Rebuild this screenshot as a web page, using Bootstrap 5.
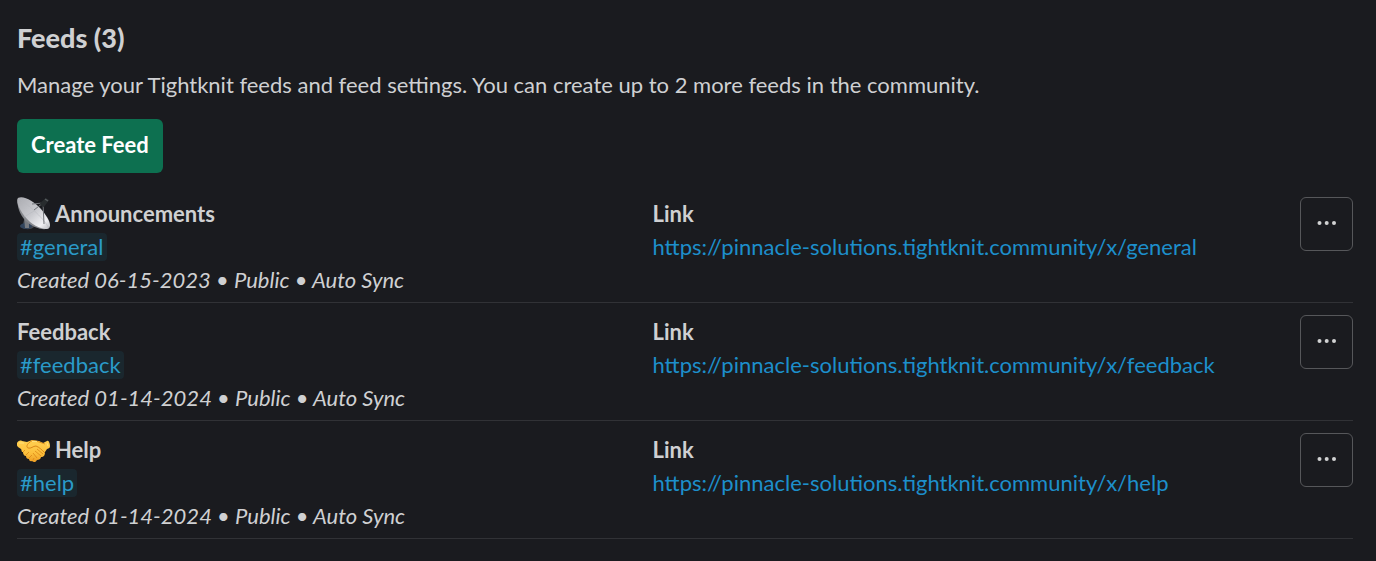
<!DOCTYPE html>
<html lang="en" data-bs-theme="dark">
<head>
<meta charset="utf-8">
<meta name="viewport" content="width=device-width, initial-scale=1">
<title>Feeds</title>
<link href="https://cdn.jsdelivr.net/npm/bootstrap@5.3.0/dist/css/bootstrap.min.css" rel="stylesheet">
<style>
  body { background: #1a1b1f; color: #cfd0d2; font-family: Lato, "Liberation Sans", sans-serif; font-size: 22px; line-height: 33px; }
  .feeds { padding: 20px 23px 22px 17px; }
  .feeds-title { color: inherit; font-size: 27px; line-height: 36px; font-weight: 900; }
  .feeds-intro { margin: 12px 0 18px; }
  .btn-create { --bs-btn-color: #fff; --bs-btn-bg: #0d7050; --bs-btn-hover-color: #fff; --bs-btn-hover-bg: #0f7d5a; --bs-btn-border-width: 0; --bs-btn-border-radius: 6px; padding: 9px 14px 12px; font-size: 22px; font-weight: 700; line-height: 33px; }
  .feed-list { padding-top: 12px; }
  .feed { padding: 12px 0 6px; gap: 12px; border-bottom: 1px solid #313236; }
  .feed-name { color: inherit; font-size: 22px; line-height: 33px; font-weight: 700; gap: 5px; }
  .channel { display: inline-block; line-height: 28px; padding: 0 3px; border-radius: 4px; background: #1a272e; color: #2a9bc9; }
  .feed-url { color: #1d8fcb; }
  .btn-more { --bs-btn-color: #d1d2d3; --bs-btn-border-color: #56575a; --bs-btn-hover-color: #fff; --bs-btn-hover-border-color: #77787b; --bs-btn-border-radius: 6px; padding: 0 0 2px; width: 53px; height: 54px; }
</style>
</head>
<body>
<main class="feeds">
  <h1 class="feeds-title mb-0">Feeds (3)</h1>
  <p class="feeds-intro">Manage your Tightknit feeds and feed settings. You can create up to 2 more feeds in the community.</p>
  <button type="button" class="btn btn-create d-block">Create Feed</button>

  <ul class="feed-list list-unstyled mb-0">
    <li class="feed d-flex align-items-start">
      <div class="row g-0 flex-grow-1">
        <div class="col-6">
          <h2 class="feed-name d-flex align-items-center mb-0">
            <svg width="33" height="33" viewBox="0 0 33 33" aria-hidden="true">
              <defs>
                <linearGradient id="dish" x1="0" y1="0" x2="1" y2="1"><stop offset="0" stop-color="#aaabb0"/><stop offset=".5" stop-color="#c9cacf"/><stop offset=".8" stop-color="#f0f0f3"/><stop offset="1" stop-color="#b7b8bd"/></linearGradient>
              </defs>
              <path d="M7 23l-2 7c2 3 9 3 12 0l-3-7z" fill="#44484e"/>
              <ellipse cx="9" cy="29" rx="6" ry="3" fill="#31445c"/>
              <path d="M7 20h5v11H8z" fill="#767a80"/>
              <path d="M1 1C-1 8 3 19 10 25c7 6 17 9 22 6z" fill="#87898e"/>
              <path d="M1 1C6-2 17 4 24 12s11 16 8 19-14-1-21-8S-2 5 1 1z" fill="url(#dish)"/>
              <path d="M1 1c9 6 24 18 31 30M17 14L7 20" fill="none" stroke="#b5b7bc" stroke-width=".5"/>
              <path d="M15 7l11-1M17 13l9-7M26 6l1 21" fill="none" stroke="#72757a" stroke-width="1"/>
              <path d="M23 6l6-5 3 2-5 7-3-1z" fill="#282c2e"/>
              <path d="M28 2l3 2" stroke="#565b5e" stroke-width="1.5"/>
            </svg>
            Announcements
          </h2>
          <div><a href="#general" class="channel text-decoration-none">#general</a></div>
          <div class="fst-italic">Created 06-15-2023 • Public • Auto Sync</div>
        </div>
        <div class="col-6">
          <div class="fw-bold">Link</div>
          <a class="feed-url text-decoration-none" href="https://pinnacle-solutions.tightknit.community/x/general">https://pinnacle-solutions.tightknit.community/x/general</a>
        </div>
      </div>
      <button type="button" class="btn btn-more d-flex align-items-center justify-content-center flex-shrink-0" aria-label="More actions for Announcements">
        <svg width="20" height="6" viewBox="0 0 20 6" fill="currentColor" aria-hidden="true"><circle cx="2.5" cy="3" r="2"/><circle cx="9.7" cy="3" r="2"/><circle cx="17" cy="3" r="2"/></svg>
      </button>
    </li>

    <li class="feed d-flex align-items-start">
      <div class="row g-0 flex-grow-1">
        <div class="col-6">
          <h2 class="feed-name mb-0">Feedback</h2>
          <div><a href="#feedback" class="channel text-decoration-none">#feedback</a></div>
          <div class="fst-italic">Created 01-14-2024 • Public • Auto Sync</div>
        </div>
        <div class="col-6">
          <div class="fw-bold">Link</div>
          <a class="feed-url text-decoration-none" href="https://pinnacle-solutions.tightknit.community/x/feedback">https://pinnacle-solutions.tightknit.community/x/feedback</a>
        </div>
      </div>
      <button type="button" class="btn btn-more d-flex align-items-center justify-content-center flex-shrink-0" aria-label="More actions for Feedback">
        <svg width="20" height="6" viewBox="0 0 20 6" fill="currentColor" aria-hidden="true"><circle cx="2.5" cy="3" r="2"/><circle cx="9.7" cy="3" r="2"/><circle cx="17" cy="3" r="2"/></svg>
      </button>
    </li>

    <li class="feed d-flex align-items-start">
      <div class="row g-0 flex-grow-1">
        <div class="col-6">
          <h2 class="feed-name d-flex align-items-center mb-0">
            <svg width="33" height="33" viewBox="0 0 33 33" aria-hidden="true">
              <defs>
                <linearGradient id="skin" x1="0" y1="0" x2="0" y2="1"><stop offset="0" stop-color="#ffd052"/><stop offset=".6" stop-color="#fcc03c"/><stop offset="1" stop-color="#ee9d24"/></linearGradient>
              </defs>
              <path d="M0 10C1 8 3 7 5 8l5 1 5-2 7 1 4 2 4-2c2-1 3 3 3 5s-1 2-3 3l-2 3c0 3-1 5-4 5 0 2-2 3-4 3-1 2-3 3-5 1-2 1-3-1-3-2-2 0-3-1-3-3-2 0-3-2-3-4-2 0-1-2-2-3l-3-2C0 13-1 11 0 10z" fill="url(#skin)"/>
              <path d="M13 9c-3 2-4 5-2 6 3 1 5-2 8-2 3 1 6 4 9 7" fill="none" stroke="#d98718" stroke-width="1"/>
              <path d="M13 9c2-2 6-1 9 0l6 2M6 19l2-2M9 22l3-3M12 25l3-3M16 27l1-2M18 18l6 5M16 20l4 5M20 16l6 5" fill="none" stroke="#d98718" stroke-width=".8"/>
              <path d="M2 10l5 0M15 8.500l5 0M30 10l1 3" fill="none" stroke="#ffe07a" stroke-width="1"/>
            </svg>
            Help
          </h2>
          <div><a href="#help" class="channel text-decoration-none">#help</a></div>
          <div class="fst-italic">Created 01-14-2024 • Public • Auto Sync</div>
        </div>
        <div class="col-6">
          <div class="fw-bold">Link</div>
          <a class="feed-url text-decoration-none" href="https://pinnacle-solutions.tightknit.community/x/help">https://pinnacle-solutions.tightknit.community/x/help</a>
        </div>
      </div>
      <button type="button" class="btn btn-more d-flex align-items-center justify-content-center flex-shrink-0" aria-label="More actions for Help">
        <svg width="20" height="6" viewBox="0 0 20 6" fill="currentColor" aria-hidden="true"><circle cx="2.5" cy="3" r="2"/><circle cx="9.7" cy="3" r="2"/><circle cx="17" cy="3" r="2"/></svg>
      </button>
    </li>
  </ul>
</main>
<script src="https://cdn.jsdelivr.net/npm/bootstrap@5.3.0/dist/js/bootstrap.bundle.min.js"></script>
</body>
</html>
